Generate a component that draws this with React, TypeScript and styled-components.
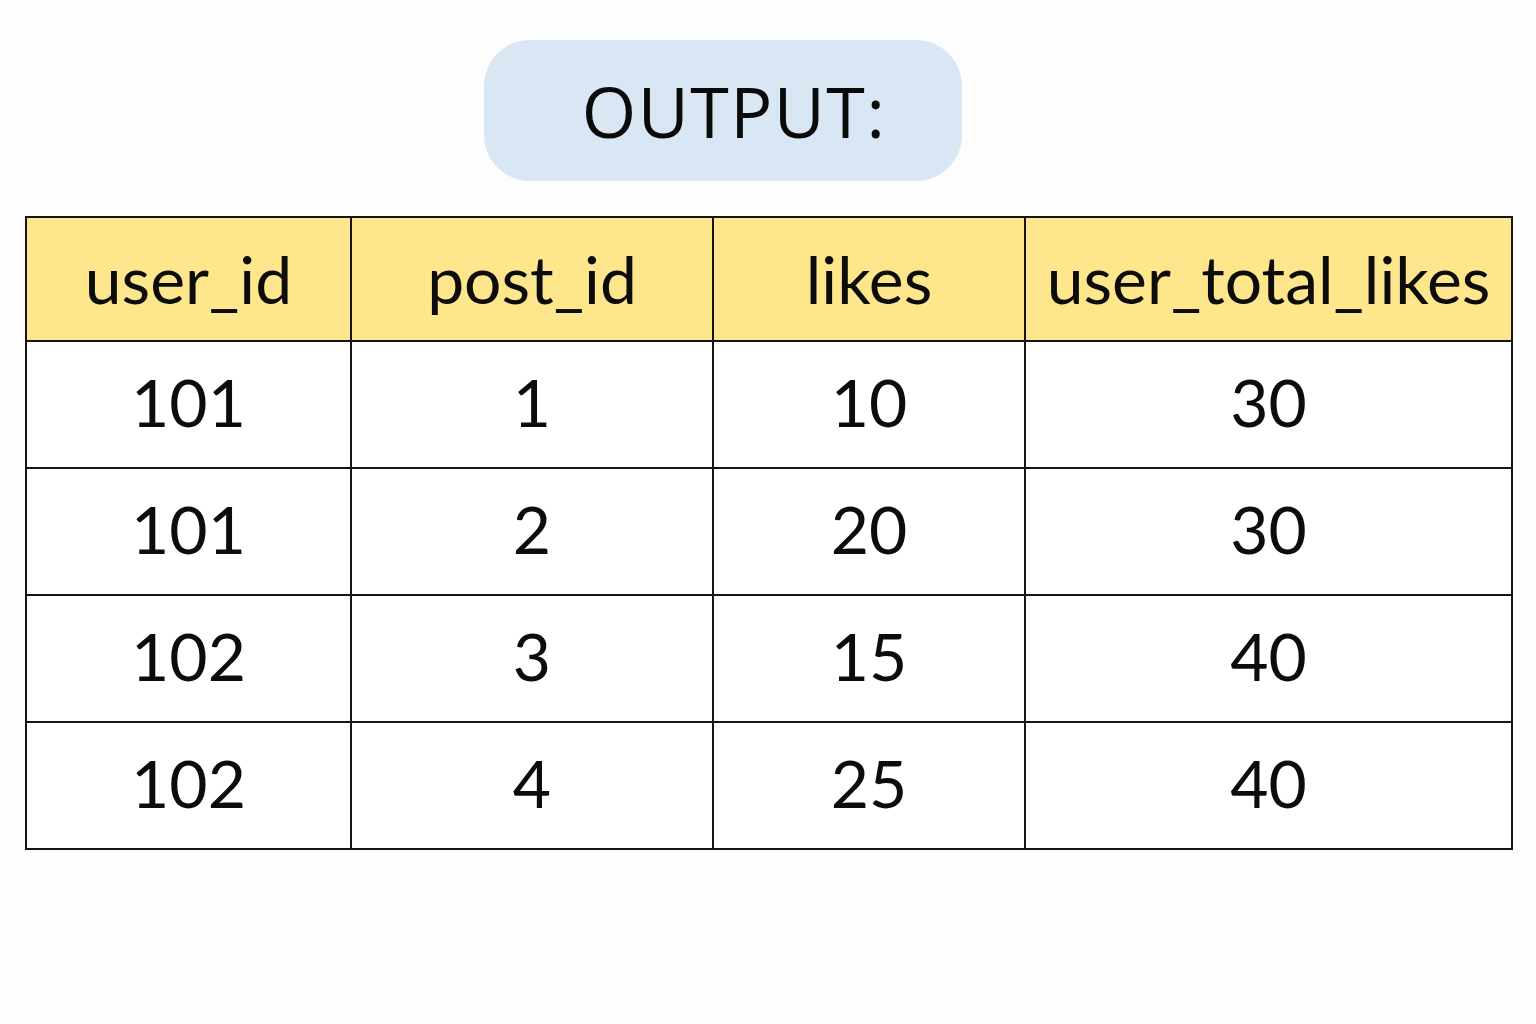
import React from "react";
import styled, { createGlobalStyle } from "styled-components";

const Global = createGlobalStyle`
  html, body { margin: 0; padding: 0; background: #fdfdfd; }
  body { font-family: Lato, "Open Sans", sans-serif; color: #111; }
`;

const Page = styled.div`
  width: 1536px;
  height: 1024px;
  display: flex;
  flex-direction: column;
  align-items: flex-start;
  padding-top: 40px;
  box-sizing: border-box;
`;

const Pill = styled.div`
  margin-left: 484px;
  width: 478px;
  height: 141px;
  border-radius: 46px;
  background: #d9e6f4;
  display: flex;
  align-items: center;
  justify-content: center;
  padding-left: 22px;
  box-sizing: border-box;
  font-family: "Open Sans", sans-serif;
  font-size: 70px;
  color: #0a0a0a;
  letter-spacing: 1.5px;
`;

const Table = styled.table`
  margin-top: 35px;
  margin-left: 25px;
  border-collapse: collapse;
  table-layout: fixed;
  width: 1486px;
`;

const Cell = styled.td<{ $head?: boolean }>`
  border: 2px solid #151515;
  height: ${(p) => (p.$head ? 122 : 119)}px;
  padding: 0 0 ${(p) => (p.$head ? 0 : 6)}px 0;
  text-align: center;
  vertical-align: middle;
  font-size: 66px;
  font-weight: 400;
  line-height: 1;
  background: ${(p) => (p.$head ? "#fde68b" : "#ffffff")};
  color: #0c0c0c;
`;

const widths = [325, 362, 312, 487];
const head = ["user_id", "post_id", "likes", "user_total_likes"];
const rows = [
  ["101", "1", "10", "30"],
  ["101", "2", "20", "30"],
  ["102", "3", "15", "40"],
  ["102", "4", "25", "40"],
];

export default function App() {
  return (
    <>
      <Global />
      <Page>
        <Pill>OUTPUT:</Pill>
        <Table>
          <colgroup>
            {widths.map((w, i) => (
              <col key={i} style={{ width: w }} />
            ))}
          </colgroup>
          <thead>
            <tr>
              {head.map((h) => (
                <Cell as="th" $head key={h}>
                  {h}
                </Cell>
              ))}
            </tr>
          </thead>
          <tbody>
            {rows.map((r, i) => (
              <tr key={i}>
                {r.map((c, j) => (
                  <Cell key={j}>{c}</Cell>
                ))}
              </tr>
            ))}
          </tbody>
        </Table>
      </Page>
    </>
  );
}
